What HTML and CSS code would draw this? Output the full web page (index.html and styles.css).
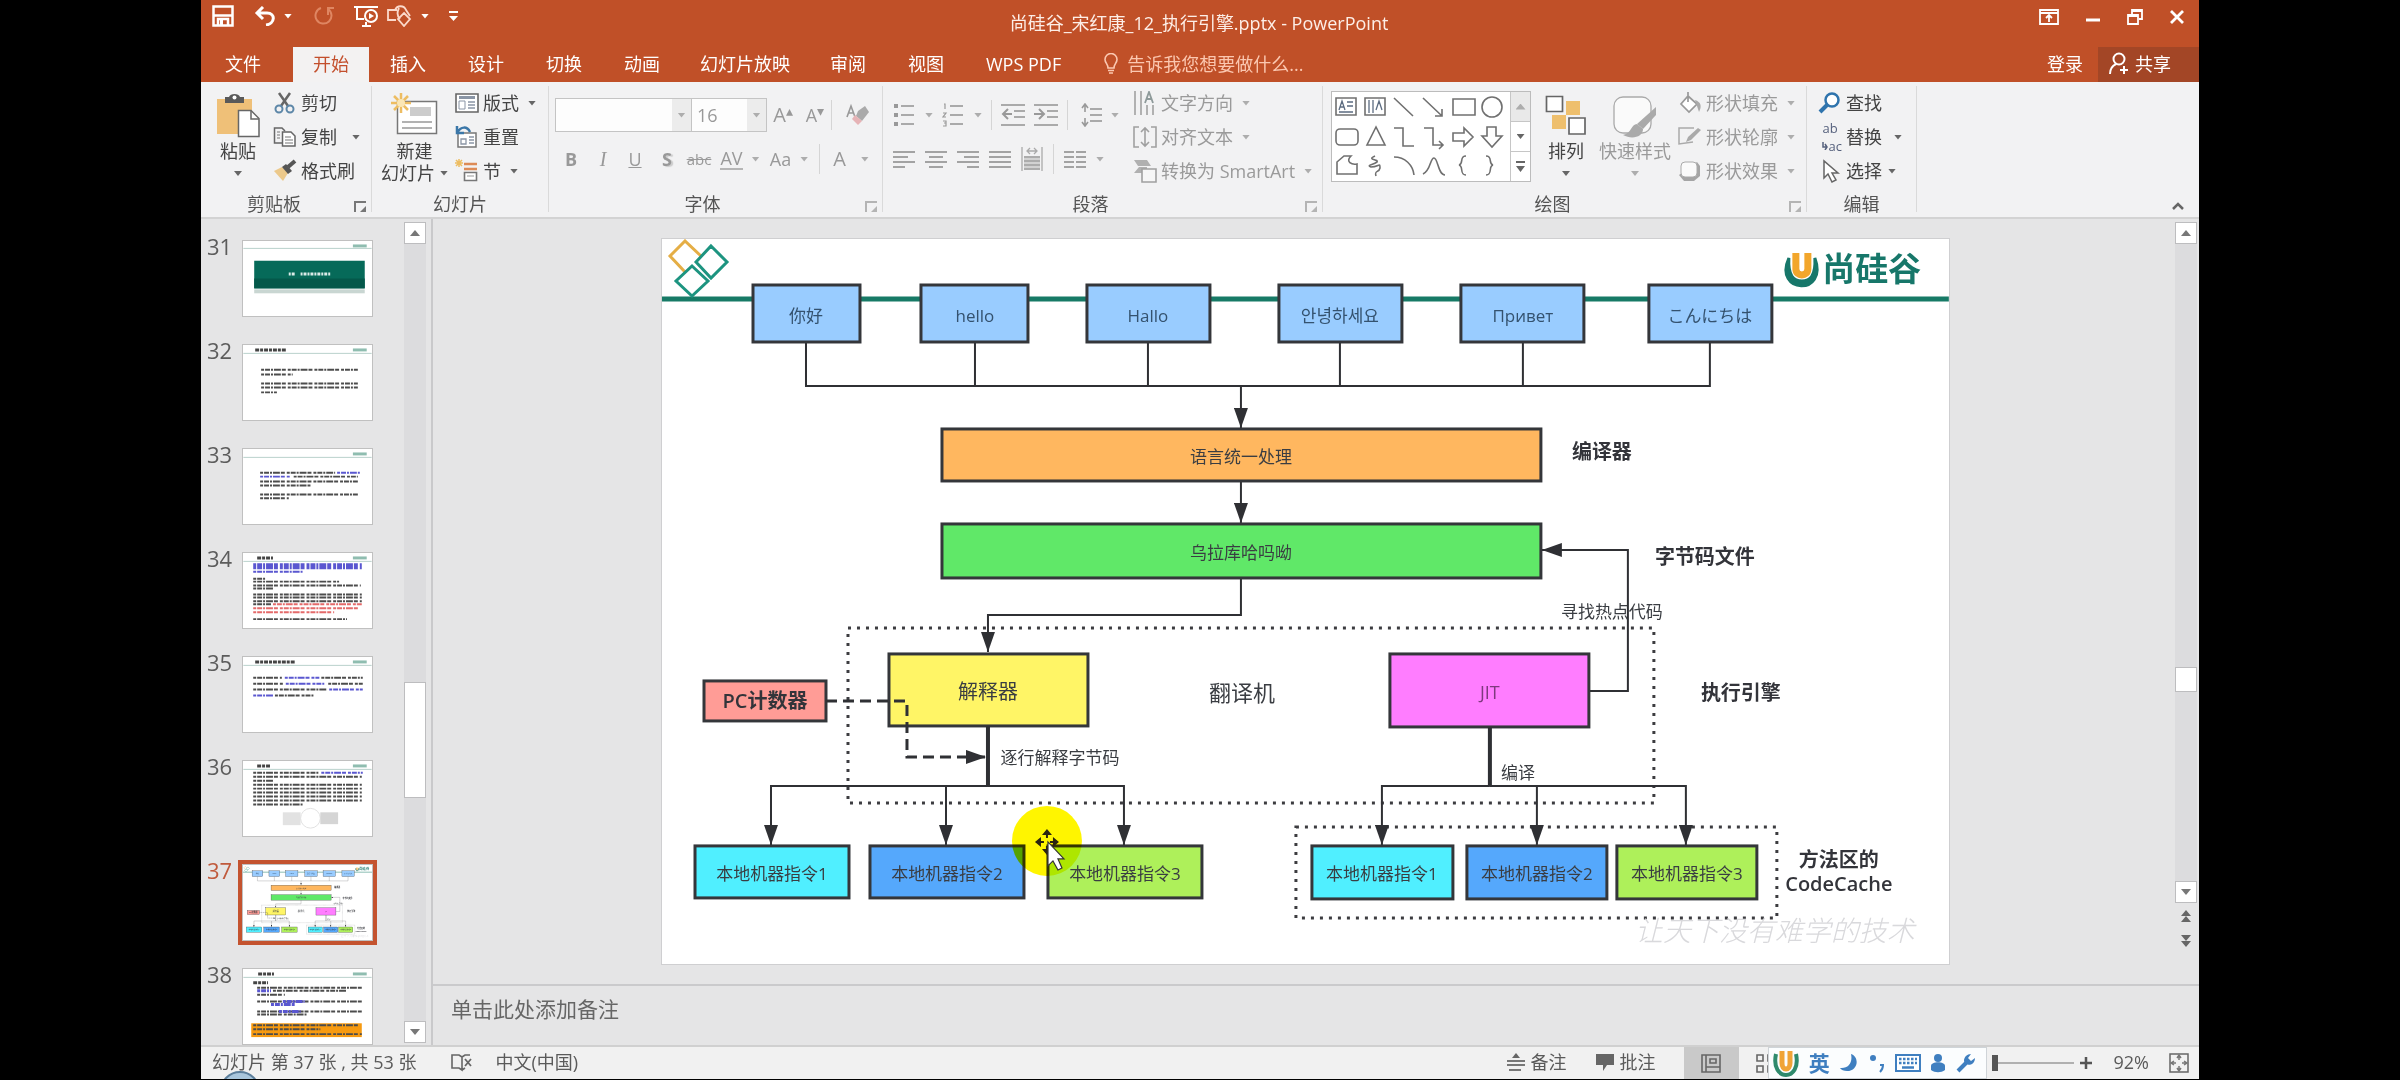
FILE: index.html
```html
<!DOCTYPE html>
<html lang="zh-CN">
<head>
<meta charset="utf-8">
<title>尚硅谷_宋红康_12_执行引擎.pptx - PowerPoint</title>
<link rel="stylesheet" href="styles.css">
</head>
<body>
<div class="app">
  <header class="titlebar">
    <div class="qat">
      <button class="qbtn" aria-label="保存"><svg width="22" height="22" viewBox="0 0 22 22"><path d="M1.5 1.500h19v19h-19z" fill="none" stroke="#fff" stroke-width="2.500"/><path d="M2 10.500h18M6 20v-6h10v6" fill="none" stroke="#fff" stroke-width="2.500"/><path d="M8 15h3v5h-3z" fill="#fff"/></svg></button>
      <button class="qbtn qbtn-undo" aria-label="撤消"><svg width="22" height="20" viewBox="0 0 22 20"><path d="M9 1 3 7l6 6M3 7h10c9 0 8 11-1 12" fill="none" stroke="#fff" stroke-width="3"/></svg><span class="caret"></span></button>
      <button class="qbtn qbtn-redo" aria-label="恢复"><svg width="20" height="20" viewBox="0 0 20 20"><path d="M7 2a8 8 0 1 0 7 1M14 9V2h6" fill="none" stroke="#df8662" stroke-width="2"/></svg></button>
      <button class="qbtn qbtn-show" aria-label="从头开始放映"><svg width="26" height="22" viewBox="0 0 26 22"><path d="M0 2h24M3 2v12h7M8 21h9M12 17v4" fill="none" stroke="#fff" stroke-width="2"/><circle cx="17" cy="11" r="6" fill="none" stroke="#fff" stroke-width="2"/><path d="m15 8 5 3-5 3z" fill="#fff"/></svg></button>
      <button class="qbtn qbtn-shape" aria-label="形状"><svg width="26" height="22" viewBox="0 0 26 22"><path d="M9 15H1V5h9M8 5c2-5 9-5 11 0l4 6M12 3c-2 4-2 8 1 11M17 8l6 6-6 7-6-7z" fill="none" stroke="#fbd9cb" stroke-width="1.800"/></svg><span class="caret"></span></button>
      <button class="qbtn qbtn-more" aria-label="自定义快速访问工具栏"><svg width="9" height="11" viewBox="0 0 9 11"><path d="M0 1h9" stroke="#fff" stroke-width="2"/><path d="M0 5h9L4.500 10z" fill="#fff"/></svg></button>
    </div>
    <h1 class="doc-title">尚硅谷_宋红康_12_执行引擎.pptx - PowerPoint</h1>
    <div class="winbtns">
      <button aria-label="功能区显示选项"><svg width="20" height="16" viewBox="0 0 20 16"><path d="M1 1h18v14H1zM1 4h18M10 13V7M7 9l3-3 3 3" fill="none" stroke="#fff" stroke-width="1.800"/></svg></button>
      <button aria-label="最小化"><svg width="14" height="16" viewBox="0 0 14 16"><path d="M0 11h14" stroke="#fff" stroke-width="3"/></svg></button>
      <button aria-label="还原"><svg width="16" height="16" viewBox="0 0 16 16"><path d="M1 6h10v9H1zM5 5V1h10v9h-3" fill="none" stroke="#fff" stroke-width="1.800"/><path d="M1 7h10M5 2h10" stroke="#fff" stroke-width="2"/></svg></button>
      <button aria-label="关闭"><svg width="14" height="14" viewBox="0 0 14 14"><path d="m1 1 12 12M13 1 1 13" stroke="#fff" stroke-width="2.800"/></svg></button>
    </div>
  </header>

  <nav class="tabs">
    <button class="tab tab-file">文件</button>
    <button class="tab tab-active">开始</button>
    <button class="tab">插入</button>
    <button class="tab">设计</button>
    <button class="tab">切换</button>
    <button class="tab">动画</button>
    <button class="tab tab-show">幻灯片放映</button>
    <button class="tab">审阅</button>
    <button class="tab">视图</button>
    <button class="tab">WPS PDF</button>
    <button class="tell"><svg width="14" height="21" viewBox="0 0 14 21"><path d="M4 15c0-4-3-5-3-8.500a6 6 0 0 1 12 0C13 10 10 11 10 15zM4 17.500h6M5 20h4" fill="none" stroke="#fbc7b0" stroke-width="1.600"/></svg>告诉我您想要做什么...</button>
    <button class="login">登录</button>
    <button class="share"><svg width="20" height="24" viewBox="0 0 20 24"><circle cx="10" cy="7" r="5.500" fill="none" stroke="#fff" stroke-width="2"/><path d="M7 12c-4 2-6 5-6 10M11 18h8M15 14v8" fill="none" stroke="#fff" stroke-width="2"/></svg>共享</button>
  </nav>

  <section class="ribbon">
    <div class="group g-clip">
      <div class="group-body">
        <button class="big big-paste"><svg width="44" height="45" viewBox="0 0 44 45"><path d="M1 6h35v35H1z" fill="#efc078"/><path d="M9 4h4c1-4 10-4 11 0h4v6H9z" fill="#595959"/><circle cx="18.500" cy="4.500" r="2" fill="#fff"/><path d="M22.500 17.500H35l8 8v18H22.500z" fill="#fff" stroke="#666" stroke-width="1.500"/><path d="M35 18v8h8" fill="none" stroke="#666" stroke-width="1.500"/></svg><span class="big-label">粘贴</span><span class="caret"></span></button>
        <div class="stack">
          <button class="tool"><svg width="24" height="24" viewBox="0 0 24 24"><path d="m6 2 9 13M17 2 8 15" stroke="#666" stroke-width="2.500"/><circle cx="6" cy="18" r="3.500" fill="none" stroke="#5d87a8" stroke-width="2"/><circle cx="17" cy="18" r="3.500" fill="none" stroke="#5d87a8" stroke-width="2"/></svg>剪切</button>
          <button class="tool"><svg width="24" height="24" viewBox="0 0 24 24"><path d="M9 18H1.500V3H9l3 3" fill="none" stroke="#666" stroke-width="1.500"/><path d="M9.500 7H18l4 4v10H9.500z" fill="#fff" stroke="#666" stroke-width="1.500"/><path d="M12 12h6M12 15h8M12 18h8M4 7h3M4 10h3M4 13h3" stroke="#777" stroke-width="1.200"/></svg>复制<span class="caret caret-wide"></span></button>
          <button class="tool"><svg width="24" height="24" viewBox="0 0 24 24"><path d="m1 12 8-4 6 6-5 8z" fill="#ecc98b"/><path d="m9 8 4-3 6 7-4 3z" fill="#555"/><path d="m15 8 7-6" stroke="#555" stroke-width="4"/></svg>格式刷</button>
        </div>
      </div>
      <div class="group-name">剪贴板<span class="launch"></span></div>
    </div>

    <div class="group g-slides">
      <div class="group-body">
        <button class="big big-new"><svg width="48" height="45" viewBox="0 0 48 45"><path d="M6.500 8.500h39v32h-39z" fill="#fff" stroke="#777" stroke-width="1.500"/><path d="M19 14h21v9H19z" fill="#ccc"/><path d="M11 29h30M11 35h30" stroke="#999" stroke-width="1.500"/><path d="M10 0v20M0 10h20M3 3l14 14M17 3 3 17" stroke="#edbd62" stroke-width="2.500"/><circle cx="10" cy="10" r="4" fill="#fbe6b4"/></svg><span class="big-label">新建</span><span class="big-label">幻灯片<span class="caret"></span></span></button>
        <div class="stack">
          <button class="tool"><svg width="24" height="24" viewBox="0 0 24 24"><path d="M1 3h22v18H1z" fill="#fff" stroke="#666" stroke-width="1.600"/><path d="M4 6.500h16" stroke="#8a95a5" stroke-width="3"/><path d="M4 10h6v8H4z" fill="none" stroke="#8a95a5"/><path d="M13 11h7M13 14h7M13 17h7" stroke="#8a95a5" stroke-width="1.500"/></svg>版式<span class="caret"></span></button>
          <button class="tool"><svg width="24" height="24" viewBox="0 0 24 24"><path d="M3 8h18v14H3z" fill="#fff" stroke="#777" stroke-width="1.500"/><path d="M6 14h5v5H6zM14 12h5M14 15h5M14 18h5" fill="none" stroke="#8a95a5" stroke-width="1.300"/><path d="M2 1v7h7M2 8C6 1 12 1 15 7" fill="none" stroke="#3b77a8" stroke-width="2.500"/></svg>重置</button>
          <button class="tool"><svg width="24" height="24" viewBox="0 0 24 24"><path d="M9 5h13M9 10h13" stroke="#dd8b56" stroke-width="2.500"/><path d="M9.500 13.500h12v8h-12z" fill="#fff" stroke="#777" stroke-width="1.600"/><path d="M12 17h7" stroke="#999"/><path d="M4 0v8M0 4h8M1 1l6 6M7 1 1 7" stroke="#edbd62" stroke-width="1.500"/></svg>节<span class="caret"></span></button>
        </div>
      </div>
      <div class="group-name">幻灯片</div>
    </div>

    <div class="group g-font">
      <div class="group-rows">
        <div class="rrow">
          <label class="combo combo-name"><select aria-label="字体"><option></option></select><span class="combo-arrow"><span class="caret dim"></span></span></label>
          <label class="combo combo-size"><select aria-label="字号"><option>16</option></select><span class="combo-arrow"><span class="caret dim"></span></span></label>
          <button class="fbtn f-grow" aria-label="增大字号">A<sup>▴</sup></button>
          <button class="fbtn f-shrink" aria-label="减小字号">A<sup>▾</sup></button>
          <span class="vsep"></span>
          <button class="fbtn f-clear" aria-label="清除格式"><svg width="24" height="24" viewBox="0 0 24 24"><path d="m1 14 4-11 4 11M2 10h6" fill="none" stroke="#999" stroke-width="1.600"/><path d="m12 8 7-5 4 6-7 9-6-5z" fill="#aaa"/><path d="m9 12 7 6-4 4-6-6z" fill="#e6b3b6"/></svg></button>
        </div>
        <div class="rrow">
          <button class="fbtn"><b>B</b></button>
          <button class="fbtn f-serif"><i>I</i></button>
          <button class="fbtn"><u>U</u></button>
          <button class="fbtn f-shadow"><b>S</b></button>
          <button class="fbtn f-strike"><s>abc</s></button>
          <button class="fbtn f-av"><span class="av">AV</span><span class="caret dim"></span></button>
          <button class="fbtn f-aa">Aa<span class="caret dim"></span></button>
          <span class="vsep"></span>
          <button class="fbtn f-color">A<span class="caret dim"></span></button>
        </div>
      </div>
      <div class="group-name name-font">字体<span class="launch dim"></span></div>
    </div>

    <div class="group g-para">
      <div class="group-body">
        <div class="group-rows">
          <div class="rrow prow">
            <button class="pbtn"><svg width="22" height="24" viewBox="0 0 22 24"><path d="M8 3h13M8 12h13M8 21h13" stroke="#aaa" stroke-width="1.800"/><path d="M1 3h4M1 12h4M1 21h4" stroke="#999" stroke-width="4"/></svg><span class="caret dim"></span></button>
            <button class="pbtn"><svg width="22" height="24" viewBox="0 0 22 24"><path d="M8 3h13M8 12h13M8 21h13" stroke="#aaa" stroke-width="1.800"/><path d="M2 1h1v5M1 10h3l-3 4h3M1 18h3v5H1M2 20h2" fill="none" stroke="#999" stroke-width="1.200"/></svg><span class="caret dim"></span></button>
            <span class="vsep"></span>
            <button class="pbtn"><svg width="24" height="24" viewBox="0 0 24 24"><path d="M0 2h24M13 8h11M13 14h11M0 22h24" stroke="#aaa" stroke-width="1.800"/><path d="M11 11H3M7 6l-5 5 5 5" fill="none" stroke="#999" stroke-width="2"/></svg></button>
            <button class="pbtn"><svg width="24" height="24" viewBox="0 0 24 24"><path d="M0 2h24M13 8h11M13 14h11M0 22h24" stroke="#aaa" stroke-width="1.800"/><path d="M0 11h9M5 6l5 5-5 5" fill="none" stroke="#999" stroke-width="2"/></svg></button>
            <span class="vsep"></span>
            <button class="pbtn pbtn-space"><svg width="22" height="24" viewBox="0 0 22 24"><path d="M9 6h12M9 12h12M9 18h12" stroke="#aaa" stroke-width="1.800"/><path d="M4 1v8M4 15v8M1 5l3-4 3 4M1 19l3 4 3-4" fill="none" stroke="#999" stroke-width="1.600"/></svg><span class="caret dim"></span></button>
          </div>
          <div class="rrow prow prow-align">
            <button class="pbtn"><svg width="22" height="18" viewBox="0 0 22 18"><path d="M0 2h22M0 7h15M0 12h22M0 17h12" stroke="#a3a3a3" stroke-width="1.800"/></svg></button>
            <button class="pbtn"><svg width="22" height="18" viewBox="0 0 22 18"><path d="M0 2h22M4 7h14M0 12h22M4 17h14" stroke="#a3a3a3" stroke-width="1.800"/></svg></button>
            <button class="pbtn"><svg width="22" height="18" viewBox="0 0 22 18"><path d="M0 2h22M7 7h15M0 12h22M10 17h12" stroke="#a3a3a3" stroke-width="1.800"/></svg></button>
            <button class="pbtn"><svg width="22" height="18" viewBox="0 0 22 18"><path d="M0 2h22M0 7h22M0 12h22M0 17h22" stroke="#a3a3a3" stroke-width="1.800"/></svg></button>
            <button class="pbtn"><svg width="22" height="24" viewBox="0 0 22 24"><path d="M1 0v24M21 0v24M6 4h10M9 1 6 4l3 3M13 1l3 3-3 3" fill="none" stroke="#aaa" stroke-width="1.300"/><path d="M3 9h16v14H3z" fill="#d2d2d2"/><path d="M3 10h16M3 14h16M3 18h16M3 22h16" stroke="#a0a0a0" stroke-width="1.500"/></svg></button>
            <span class="vsep"></span>
            <button class="pbtn"><svg width="22" height="18" viewBox="0 0 22 18"><path d="M0 2h10M12 2h10M0 7h10M12 7h10M0 12h10M12 12h10M0 17h10M12 17h10" stroke="#a3a3a3" stroke-width="1.800"/></svg><span class="caret dim"></span></button>
          </div>
        </div>
        <div class="stack stack-para">
          <button class="tool off"><svg width="24" height="24" viewBox="0 0 24 24"><path d="M2 0v24M8 0v24M14 14v10M20 14v10" stroke="#aaa" stroke-width="1.800"/><path d="m12 12 4-11 4 11M14 8h5" fill="none" stroke="#8e9a9a" stroke-width="1.800"/></svg>文字方向<span class="caret dim"></span></button>
          <button class="tool off"><svg width="24" height="24" viewBox="0 0 24 24"><path d="M6 2H1v20h5M18 2h5v20h-5M12 3v18M8 7l4-4 4 4M8 17l4 4 4-4" fill="none" stroke="#a0a0a0" stroke-width="1.600"/></svg>对齐文本<span class="caret dim"></span></button>
          <button class="tool off"><svg width="24" height="24" viewBox="0 0 24 24"><path d="M1 1h13l4 6H5zM1 14l5-6h8v6z" fill="#b0b0b0"/><path d="M9 10h14v13H9z" fill="#f6f6f6" stroke="#a0a0a0" stroke-width="1.600"/></svg>转换为 SmartArt<span class="caret dim"></span></button>
        </div>
      </div>
      <div class="group-name">段落<span class="launch dim"></span></div>
    </div>

    <div class="group g-draw">
      <div class="group-body">
        <div class="gallery">
          <svg class="shapes" viewBox="0 0 178 88" width="178" height="88">
            <g fill="none" stroke="#707070" stroke-width="1.600">
              <path d="M4 6h20v17H4zM33 6h20v17H33z"/><path d="m7 18 3-9 3 9M8 15h4M15 10h6M15 14h6M7 20h14M37 8v13M41 8v13M44 18l3-9 3 9" stroke="#5b6b80" stroke-width="1.300"/>
              <path d="m62 6 19 18M91 6l19 18M110 17v7h-7M121 7h22v16h-22z"/><circle cx="160" cy="15" r="10"/>
              <rect x="4" y="37" width="22" height="16" rx="4"/><path d="m44 35-9 18h18zM62 36h9v18h11M92 36h9v17h9M107 49l4 4-4 4M121 41h11v-5l9 9-9 9v-5h-11zM155 35h9v9h6l-10 11-10-11h5z"/>
              <path d="m5 70 7-6h7c-6 6 1 9 6 8v10H5zM43 64c-9 4 4 3 2 6-4 3-11 3-6 5 8 0 9-5 9 1-1 5-6 2-4 8M62 65c11 0 19 8 20 18M91 82c8-4 7-16 11-16s4 17 11 17M134 64c-7 0-2 8-7 9 5 1 0 10 7 10M154 64c7 0 2 8 7 9-5 1 0 10-7 10"/>
            </g>
          </svg>
          <div class="gallery-nav"><button class="gnav-off" aria-label="上一行"><span class="caret-up dim"></span></button><button aria-label="下一行"><span class="caret"></span></button><button aria-label="其他"><span class="caret caret-bar"></span></button></div>
        </div>
        <button class="big big-arr"><svg width="42" height="45" viewBox="0 0 42 45"><path d="M21 8h14v14H21zM7 22h14v14H7z" fill="#eebf6d"/><path d="M1.500 3.500h16v15h-16zM24 25h16v16H24z" fill="#fff" stroke="#666" stroke-width="1.700"/></svg><span class="big-label">排列</span><span class="caret"></span></button>
        <button class="big big-style off"><svg width="44" height="45" viewBox="0 0 44 45"><rect x="1" y="4" width="37" height="36" rx="9" fill="#fafafa" stroke="#aaa" stroke-width="1.300"/><path d="M43 14v8L30 36l-6-5z" fill="#aaa"/><path d="M24 31c-6 0-5 9-14 11 9 5 20 2 20-6z" fill="#aaa"/></svg><span class="big-label">快速样式</span><span class="caret dim"></span></button>
        <div class="stack stack-draw">
          <button class="tool off"><svg width="24" height="24" viewBox="0 0 24 24"><path d="m10 5 9 8-8 8-8-8zM10 11V1" fill="#fff" stroke="#999" stroke-width="1.700"/><path d="M17 9c6 2 7 6 4 12z" fill="#aaa"/></svg>形状填充<span class="caret dim"></span></button>
          <button class="tool off"><svg width="24" height="24" viewBox="0 0 24 24"><path d="M16 3H1v16l14-2" fill="none" stroke="#aaa" stroke-width="1.500"/><path d="m8 17 2-5L20 3l3 2-10 10z" fill="#aaa"/></svg>形状轮廓<span class="caret dim"></span></button>
          <button class="tool off"><svg width="24" height="24" viewBox="0 0 24 24"><path d="m1 16 5 6h10l6-5V7l-3-4z" fill="#a5a5a5"/><rect x="3" y="3" width="16" height="15" rx="4" fill="#fafafa" stroke="#aaa"/></svg>形状效果<span class="caret dim"></span></button>
        </div>
      </div>
      <div class="group-name">绘图<span class="launch dim"></span></div>
    </div>

    <div class="group g-edit">
      <div class="group-body">
        <div class="stack">
          <button class="tool"><svg width="24" height="24" viewBox="0 0 24 24"><circle cx="14" cy="9" r="6.500" fill="#fff" stroke="#2f74ad" stroke-width="2.500"/><path d="m9 14-7 7" stroke="#2f74ad" stroke-width="4"/></svg>查找</button>
          <button class="tool"><span class="abac"><span>ab</span><span class="ac"><svg width="6" height="8" viewBox="0 0 6 8"><path d="M1 0v5h4M3 2l2 3-2 3" fill="none" stroke="#56617d" stroke-width="1.500"/></svg>ac</span></span>替换<span class="caret caret-wide"></span></button>
          <button class="tool"><svg width="24" height="24" viewBox="0 0 24 24"><path d="M6 2v17l4-4 4 8 4-2-4-7h6z" fill="#fff" stroke="#666" stroke-width="1.500"/></svg>选择<span class="caret"></span></button>
        </div>
      </div>
      <div class="group-name">编辑</div>
    </div>
    <button class="collapse" aria-label="折叠功能区"><svg width="12" height="8" viewBox="0 0 12 8"><path d="m1 7 5-5 5 5" fill="none" stroke="#666" stroke-width="2.500"/></svg></button>
  </section>

  <main class="work">
    <aside class="panel">
      <ol class="thumbs" start="31">
        <li><span class="num">31</span><div class="thumb"><svg viewBox="0 0 130 76">
          <path class="t-rule" d="M0 7.500h130"/><path class="t-logo" d="M111 5h14"/><rect x="11" y="49" width="112" height="4" fill="#c9d6d2"/><rect x="11" y="20" width="112" height="28" fill="#066a59"/><rect x="11" y="38" width="112" height="10" fill="#04584a"/><path d="M46 33.500h7M58 33.500h30" stroke="#dcebe8" stroke-width="3" stroke-dasharray="2 1 3 1"/></svg></div></li>
        <li><span class="num">32</span><div class="thumb"><svg viewBox="0 0 130 76">
          <path class="t-rule" d="M0 8.500h130"/><path class="t-logo" d="M111 5h14"/><path class="t-head" d="M12 5h32"/><path class="t-line" d="M18 25h98M18 30h32M18 39h98M18 43h98M18 48h16"/></svg></div></li>
        <li><span class="num">33</span><div class="thumb"><svg viewBox="0 0 130 76">
          <path class="t-rule" d="M0 8.500h130"/><path class="t-logo" d="M111 5h14"/><path class="t-line" d="M17 24h76M51 28h65M17 33h99M17 37h51M17 46h99M17 50h29"/><path class="t-line t-blue" d="M95 24h23M17 28h31"/></svg></div></li>
        <li><span class="num">34</span><div class="thumb"><svg viewBox="0 0 130 76">
          <path class="t-rule" d="M0 8.500h130"/><path class="t-logo" d="M111 5h14"/><path class="t-head" d="M14 5h16"/><path class="t-line t-blue t-fat" d="M10 12h110M10 15h110"/><path class="t-line t-blue" d="M10 19h50"/><path class="t-line" d="M10 26h12M10 29h87M10 33h109M10 36h20M10 42h110M10 45h110M10 49h110M10 52h18M10 67h95"/><path class="t-line t-red" d="M30 52h90M10 56h108M10 60h82"/></svg></div></li>
        <li><span class="num">35</span><div class="thumb"><svg viewBox="0 0 130 76">
          <path class="t-rule" d="M0 8.500h130"/><path class="t-logo" d="M111 5h14"/><path class="t-head" d="M12 5h41"/><path class="t-line" d="M10 21h29M79 21h42M10 27h31M86 27h35M10 33h75M32 39h39"/><path class="t-line t-blue" d="M42 21h35M43 27h40M87 33h34M10 39h20"/></svg></div></li>
        <li><span class="num">36</span><div class="thumb"><svg viewBox="0 0 130 76">
          <path class="t-rule" d="M0 8.500h130"/><path class="t-logo" d="M111 5h14"/><path class="t-head" d="M14 5h13"/><path class="t-line" d="M10 12h66M10 16h110M10 20h20M10 24h110M10 28h110M10 32h110M10 36h110M10 40h110M10 44h50"/><path class="t-line t-blue" d="M79 12h42"/><rect x="40" y="52" width="18" height="13" fill="#e2e2e2"/><circle cx="68" cy="58" r="10" fill="none" stroke="#e2e2e2"/><rect x="78" y="52" width="18" height="12" fill="#d5d5d5"/></svg></div></li>
        <li class="current"><span class="num">37</span><div class="thumb"><svg viewBox="0 0 1287 725"><use href="#slide-art"/></svg></div></li>
        <li><span class="num">38</span><div class="thumb"><svg viewBox="0 0 130 76">
          <path class="t-rule" d="M0 8.500h130"/><path class="t-logo" d="M111 5h14"/><path class="t-head" d="M15 5h16M10 14h15"/><path class="t-line" d="M14 19h106M30 22h74M14 26h28M14 33h106M14 43h106M14 46h50"/><path class="t-line t-blue t-fat" d="M14 22h14M40 33h22M28 36h24M36 43h22"/><rect x="8" y="55" width="112" height="14" fill="#f79a10"/><path class="t-line" d="M10 57h106M10 61h68M10 66h110"/></svg></div></li>
      </ol>
      <div class="scroll scroll-panel"><button aria-label="向上滚动"><span class="caret-up"></span></button><div class="track"><div class="grip"></div></div><button aria-label="向下滚动"><span class="caret"></span></button></div>
    </aside>

    <div class="editor">
      <div class="stage-row">
        <div class="stage">
          <div class="slide">
            <svg class="slide-svg" viewBox="0 0 1287 725">
              <defs>
                <marker id="arrow" viewBox="0 0 20 14" refX="20" refY="7" markerWidth="20" markerHeight="14" markerUnits="userSpaceOnUse" orient="auto"><path d="M0 0 20 7 0 14z" fill="#2f3034"/></marker>
              </defs>
              <g id="slide-art">
                <path class="brand-rule" d="M0 60h1287"/>
                <path class="diamond d-gold" d="M39 17 23 2 8 17l15 16"/>
                <path class="diamond" d="m49 7 16 16-16 16-15-16zM30 27l16 15-16 15-16-15z"/>
                <path d="M1127 19c-16 36 40 38 26 0 1 18-5 23-13 23s-14-5-13-23z" fill="#17776a" stroke="#17776a" stroke-width="3"/>
                <path d="M1134 14v16c0 8 12 8 12 0V14" fill="none" stroke="#f2a62c" stroke-width="7"/>
                <text class="brand" x="1210" y="42">尚硅谷</text>

                <path class="wire" d="M144 103v44h904v-44M313 103v44M486 103v44M678 103v44M861 103v44"/>
                <path class="wire" marker-end="url(#arrow)" d="M579 147v42"/>
                <path class="wire" marker-end="url(#arrow)" d="M579 242v42"/>
                <path class="wire" marker-end="url(#arrow)" d="M579 339v37H326v37"/>
                <path class="wire" marker-end="url(#arrow)" d="M927 452h39V311h-86"/>
                <rect class="frame" x="186" y="389" width="806" height="175"/>
                <rect class="frame" x="634" y="588" width="481" height="91"/>

                <g class="node n-sky">
                  <rect x="91" y="46" width="107" height="57"/><rect x="259" y="46" width="107" height="57"/><rect x="425" y="46" width="123" height="57"/><rect x="617" y="46" width="123" height="57"/><rect x="799" y="46" width="123" height="57"/><rect x="987" y="46" width="123" height="57"/>
                </g>
                <g class="lbl l-sky"><text x="144" y="83">你好</text><text x="313" y="83">hello</text><text x="486" y="83">Hallo</text><text x="678" y="83">안녕하세요</text><text x="861" y="83">Привет</text><text x="1048" y="83">こんにちは</text></g>

                <g class="node"><rect class="n-orange" x="280" y="190" width="599" height="52"/><rect class="n-green" x="280" y="285" width="599" height="54"/><rect class="n-yellow" x="227" y="415" width="199" height="72"/><rect class="n-red" x="42" y="442" width="122" height="40"/><rect class="n-pink" x="728" y="415" width="199" height="73"/></g>
                <g class="lbl"><text x="579" y="224">语言统一处理</text><text x="579" y="320">乌拉库哈吗呦</text><text x="398" y="525">逐行解释字节码</text><text x="856" y="540">编译</text><text class="md" x="326" y="460">解释器</text><text class="jit" x="828" y="460">JIT</text><text class="hot" x="950" y="379">寻找热点代码</text><text class="xl" x="580" y="462">翻译机</text></g>
                <g class="lbl strong"><text x="103" y="469">PC计数器</text><text x="940" y="220">编译器</text><text x="1043" y="325">字节码文件</text><text x="1079" y="461">执行引擎</text><text x="1177" y="628">方法区的</text><text x="1177" y="652">CodeCache</text></g>

                <path class="wire dash" marker-end="url(#arrow)" d="M164 462h81v56h79"/>
                <path class="wire thick" d="M326 487v60M828 488v59"/>
                <path class="wire" marker-end="url(#arrow)" d="M326 547H109v59"/>
                <path class="wire" marker-end="url(#arrow)" d="M284 547v59"/>
                <path class="wire" marker-end="url(#arrow)" d="M326 547h136v59"/>
                <path class="wire" marker-end="url(#arrow)" d="M828 547H720v59"/>
                <path class="wire" marker-end="url(#arrow)" d="M875 547v59"/>
                <path class="wire" marker-end="url(#arrow)" d="M828 547h196v59"/>

                <g class="node"><rect class="n-cyan" x="33" y="607" width="154" height="52"/><rect class="n-blue" x="208" y="607" width="154" height="52"/><rect class="n-lime" x="386" y="607" width="154" height="52"/><rect class="n-cyan" x="650" y="607" width="141" height="53"/><rect class="n-blue" x="805" y="607" width="140" height="53"/><rect class="n-lime" x="955" y="607" width="140" height="53"/></g>
                <g class="lbl"><text x="110" y="641">本地机器指令1</text><text x="285" y="641">本地机器指令2</text><text x="463" y="641">本地机器指令3</text><text x="720" y="641">本地机器指令1</text><text x="875" y="641">本地机器指令2</text><text x="1025" y="641">本地机器指令3</text></g>
                <text class="motto" x="1113" y="702">让天下没有难学的技术</text>
              </g>
              <circle class="halo" cx="385" cy="602" r="35"/>
              <path d="M385 590l5 6h-4v3h-2v-3h-4zM373 603l6-5v4h3v2h-3v4zM397 603l-6-5v4h-3v2h3v4zM385 616l-5-6h4v-3h2v3h4z" fill="#2b2410"/>
              <path d="M386 603v24l5-5 5 9 4-2-4-9h6z" fill="#fff" stroke="#333" stroke-width="1.200"/>
            </svg>
          </div>
        </div>
        <div class="scroll scroll-main"><button aria-label="向上滚动"><span class="caret-up"></span></button><div class="track"><div class="grip"></div></div><button aria-label="向下滚动"><span class="caret"></span></button>
          <button class="jump" aria-label="上一张幻灯片"><svg width="12" height="12" viewBox="0 0 12 12"><path d="m6 0 5 6H1zM6 6l5 6H1z" fill="#666"/></svg></button>
          <button class="jump" aria-label="下一张幻灯片"><svg width="12" height="12" viewBox="0 0 12 12"><path d="M1 0h10L6 6zM1 6h10l-5 6z" fill="#666"/></svg></button>
        </div>
      </div>
      <div class="notes">单击此处添加备注</div>
    </div>
  </main>

  <footer class="status">
    <span class="s-count">幻灯片 第 37 张 , 共 53 张</span>
    <button class="s-spell" aria-label="拼写检查"><svg width="22" height="20" viewBox="0 0 22 20"><path d="M11 17 8 15H1V2h7l3 2zM11 4l3-2h5M11 17l3-2" fill="none" stroke="#666" stroke-width="1.600"/><path d="m14 6 6 7M20 6l-6 7" stroke="#666" stroke-width="1.800"/></svg></button>
    <button class="s-lang">中文(中国)</button>
    <button class="s-btn s-right"><svg width="18" height="18" viewBox="0 0 18 18"><path d="m9 0 4 5H5z" fill="#666"/><path d="M0 8h18M0 12h18M2 17h12" stroke="#777" stroke-width="1.800"/></svg>备注</button>
    <button class="s-btn s-comment"><svg width="18" height="18" viewBox="0 0 18 18"><path d="M0 1h18v11h-7l-4 6v-6H0z" fill="#666"/></svg>批注</button>
    <button class="s-view" aria-label="普通视图"><svg width="20" height="19" viewBox="0 0 20 19"><path d="M1 1h18v17H1zM5 1v17M5 13h14M9 5h6v4H9z" fill="none" stroke="#666" stroke-width="1.600"/></svg></button>
    <button class="s-sorter" aria-label="幻灯片浏览"><svg width="20" height="19" viewBox="0 0 20 19"><path d="M1 1h6v6H1zM12 1h6v6h-6zM1 12h6v6H1zM12 12h6v6h-6z" fill="none" stroke="#666" stroke-width="1.600"/></svg></button>
    <input class="s-zoom" type="range" min="0" max="100" value="0" aria-label="显示比例">
    <button class="s-plus" aria-label="放大"><svg width="12" height="12" viewBox="0 0 12 12"><path d="M6 0v12M0 6h12" stroke="#555" stroke-width="2.500"/></svg></button>
    <button class="s-pct">92%</button>
    <button class="s-fit" aria-label="适应窗口"><svg width="20" height="20" viewBox="0 0 20 20"><path d="M1 1h18v18H1z" fill="none" stroke="#666" stroke-width="1.500"/><path d="M10 3v4M10 17v-4M3 10h4M17 10h-4M8 5l2-3 2 3M8 15l2 3 2-3M5 8l-3 2 3 2M15 8l3 2-3 2" fill="none" stroke="#777" stroke-width="1.500"/></svg></button>
    <div class="ime">
      <svg width="26" height="28" viewBox="0 0 26 28"><path d="M3 5c-6 28 26 28 20 0" fill="none" stroke="#2f8a6c" stroke-width="4"/><path d="M9 2v12c0 8 8 8 8 0V2" fill="none" stroke="#f0a437" stroke-width="5"/></svg>
      <span class="ime-lang">英</span>
      <svg width="20" height="20" viewBox="0 0 20 20"><path d="M12 1c9 3 7 17-4 17-3 0-6-1-7-3 8 1 13-5 11-14z" fill="#3f7fc0"/></svg>
      <svg width="16" height="20" viewBox="0 0 16 20"><circle cx="4" cy="5" r="3" fill="#3f7fc0"/><path d="M11 12h3c0 3-1 5-3 7" fill="none" stroke="#3f7fc0" stroke-width="2"/></svg>
      <svg width="26" height="20" viewBox="0 0 26 20"><rect x="1" y="2" width="24" height="16" fill="#fff" stroke="#3f7fc0" stroke-width="2"/><path d="M4 6h18M4 10h18" stroke="#3f7fc0" stroke-width="2.500" stroke-dasharray="2.500 1.500"/><path d="M7 14.500h12" stroke="#3f7fc0" stroke-width="2.500"/></svg>
      <svg width="16" height="20" viewBox="0 0 16 20"><circle cx="8" cy="5" r="4" fill="#3f7fc0"/><path d="M1 13c0-5 14-5 14 0v4c-4 3-10 3-14 0z" fill="#3f7fc0"/></svg>
      <svg width="20" height="20" viewBox="0 0 20 20"><path d="m2 18 8-8" stroke="#3f7fc0" stroke-width="4"/><path d="M19 5c0 8-10 9-11 3 0-4 3-7 7-7l-3 4 3 3z" fill="#3f7fc0"/></svg>
    </div>
    <span class="orb"></span>
  </footer>
</div>
</body>
</html>
```
FILE: styles.css
```css
* { box-sizing: border-box; }

body {
  margin: 0;
  background: #000;
  color: #444;
  font-family: "Open Sans", "Noto Sans CJK SC", sans-serif;
  font-size: 18px;
  line-height: 22px;
}

button {
  margin: 0;
  padding: 0;
  border: 0;
  background: none;
  color: inherit;
  font: inherit;
  display: flex;
  align-items: center;
  white-space: nowrap;
}

svg { flex: none; display: block; }

.app {
  height: 100vh;
  margin: 0 201px;
  border-bottom: 1px solid #000;
  display: flex;
  flex-direction: column;
  background: #e5e5e6;
  overflow: hidden;
}

/* small arrows */
.caret {
  flex: none;
  width: 8px;
  height: 5px;
  background: #666;
  clip-path: polygon(0 0, 100% 0, 50% 100%);
}
.caret-up {
  width: 10px;
  height: 6px;
  background: #777;
  clip-path: polygon(50% 0, 100% 100%, 0 100%);
}
.caret-bar {
  width: 9px;
  height: 11px;
  clip-path: polygon(0 0, 100% 0, 100% 18%, 0 18%, 0 45%, 100% 45%, 50% 100%, 0 45%);
}
.caret.dim, .caret-up.dim { background: #adadad; }

/* title bar */
.titlebar {
  flex: none;
  height: 47px;
  background: #c05028;
  color: #fff;
  display: grid;
  grid-template-columns: 1fr auto 1fr;
}
.qat { display: flex; padding: 5px 0 0 11px; height: 27px; }
.qbtn .caret { background: #fff; margin-left: 8px; }
.qbtn-undo { margin-left: 20px; }
.qbtn-redo { margin-left: 22px; }
.qbtn-show { margin-left: 20px; }
.qbtn-shape { margin-left: 7px; }
.qbtn-more { margin-left: 20px; }
.doc-title { margin: 0; padding: 12px 2px 0 0; font-size: 18px; font-weight: 400; color: #fdeee7; }
.winbtns { display: flex; justify-content: flex-end; gap: 27px; padding: 8px 15px 0 0; height: 25px; }

/* tabs */
.tabs { flex: none; height: 35px; background: #c05028; color: #fff; display: flex; }
.tab { padding: 0 21px; }
.tab-file { padding: 0 32px 0 24px; }
.tab-active { background: #f3f2f2; color: #c34f2c; padding: 0 20px; }
.tab-show { padding: 0 19px; }
.tabs button { padding-bottom: 2px; }
.tell { gap: 9px; margin-left: 22px; color: #fbc7b0; }
.login { margin-left: auto; margin-right: 15px; }
.share { width: 101px; padding-left: 11px; gap: 6px; background: #a34626; }

/* ribbon */
.ribbon {
  flex: none;
  height: 137px;
  background: #f2f2f3;
  border-bottom: 2px solid #d3d3d3;
  display: flex;
  padding-top: 4px;
}
.group {
  flex: none;
  height: 126px;
  border-right: 1px solid #dadada;
  display: flex;
  flex-direction: column;
}
.g-clip { width: 171px; }
.g-slides { width: 177px; }
.g-font { width: 334px; }
.g-para { width: 440px; }
.g-draw { width: 484px; }
.g-edit { width: 110px; }
.group-body, .group-rows { flex: none; height: 104px; }
.group-body { display: flex; }
.group-name {
  flex: none;
  position: relative;
  height: 28px;
  line-height: 28px;
  text-align: center;
  padding-right: 24px;
  color: #555;
}
.g-slides .group-name, .g-edit .group-name { padding: 0; }
.launch {
  position: absolute;
  right: 5px;
  bottom: 6px;
  width: 12px;
  height: 11px;
  border-top: 2px solid #777;
  border-left: 2px solid #777;
}
.launch::after {
  content: "";
  position: absolute;
  right: 0;
  bottom: 0;
  width: 6px;
  height: 6px;
  background: #777;
  clip-path: polygon(100% 0, 100% 100%, 0 100%);
}
.launch.dim { opacity: .5; }

.big { flex-direction: column; height: 98px; padding-top: 7px; justify-content: flex-start; }
.big-label { display: flex; align-items: center; gap: 5px; height: 22px; flex: none; }
.big svg { margin-bottom: 2px; }
.big > .caret { margin-top: 9px; }
.big-paste { width: 72px; padding-left: 2px; }
.big-new { width: 83px; padding-left: 2px; }
.big-arr { width: 60px; margin-left: 5px; }
.big-style { width: 78px; }
.off { color: #9a9a9a; }

.stack { display: flex; flex-direction: column; }
.stack .tool { height: 34px; gap: 4px; }
.tool .caret { margin-left: 5px; }
.tool .caret-wide { margin-left: 11px; }
.g-edit .stack { padding-left: 11px; }
.g-edit .caret { margin-left: 2px; }
.g-edit .caret-wide { margin-left: 8px; }
.abac {
  display: flex;
  flex-direction: column;
  width: 24px;
  color: #56617d;
  font-size: 13px;
  line-height: 18px;
}
.ac { display: flex; align-items: center; justify-content: flex-end; gap: 1px; }
.stack-para { margin-left: 14px; }
.stack-draw { margin-left: 4px; }

.rrow { display: flex; align-items: center; height: 44px; padding-left: 6px; }
.group-rows { padding-top: 7px; }
.vsep { width: 1px; height: 30px; background: #d5d5d5; flex: none; }

.combo { position: relative; height: 34px; background: #fdfdfd; border: 1px solid #c4c4c4; display: block; }
.combo + .combo { border-left: 0; }
.combo-name { width: 137px; }
.combo-size { width: 75px; }
.combo select {
  appearance: none;
  width: 100%;
  height: 100%;
  border: 0;
  background: none;
  padding: 0 0 0 5px;
  font: inherit;
  color: #999;
}
.combo-arrow {
  position: absolute;
  inset: 0 0 0 auto;
  width: 19px;
  background: #ececec;
  display: flex;
  align-items: center;
  justify-content: center;
  pointer-events: none;
}

.fbtn { width: 32px; justify-content: center; color: #999; }
.fbtn sup { font-size: 14px; line-height: 14px; align-self: flex-start; }
.f-grow { font-size: 20px; }
.f-shrink { font-size: 18px; }
.f-clear { margin-left: 10px; }
.f-serif { font-family: "Liberation Serif", serif; font-size: 20px; }
.f-shadow { text-shadow: 2px 1px 1px #ccc; }
.f-strike { font-size: 15px; }
.f-av { width: 50px; gap: 9px; }
.f-aa { width: 48px; gap: 9px; }
.f-color { width: 54px; gap: 15px; font-size: 20px; margin-left: 4px; }
.av { border-bottom: 2px solid #b5b5b5; line-height: 20px; }
.f-aa + .vsep { margin-left: 6px; }
.name-font { padding-right: 26px; }

.prow { padding-left: 10px; gap: 9px; }
.prow-align { gap: 10px; }
.pbtn { gap: 10px; }
.pbtn-space { padding-left: 4px; gap: 8px; }

.gallery {
  flex: none;
  display: flex;
  width: 200px;
  height: 91px;
  margin: 5px 0 0 8px;
  background: #fff;
  border: 1px solid #bcbcbc;
}
.gallery-nav { flex: 1; display: flex; flex-direction: column; border-left: 1px solid #c6c6c6; }
.gallery-nav button { flex: 1; justify-content: center; }
.gallery-nav button + button { border-top: 1px solid #c6c6c6; }
.gnav-off { background: #e9e9e9; }
.collapse { margin: auto 15px 7px auto; }

/* workspace */
.work { flex: 1; min-height: 0; display: flex; }
.panel { flex: none; width: 232px; display: flex; border-right: 2px solid #c9c9cb; overflow: hidden; }
.thumbs { flex: 1; list-style: none; margin: 0; padding: 21px 0 0 6px; overflow: hidden; }
.thumbs li { display: flex; height: 104px; gap: 9px; }
.num { width: 26px; flex: none; font-size: 22px; line-height: 12px; color: #5c5c5c; }
.thumb { width: 131px; height: 77px; background: #fff; border: 1px solid #c0c0c0; overflow: hidden; }
.thumb svg { width: 100%; height: 100%; }
.current .num { color: #c05a3c; }
.current .thumb { outline: 4px solid #c4532f; }

.t-rule { stroke: #b8d0cb; stroke-width: 1; }
.t-logo { stroke: #8fbdb0; stroke-width: 3; }
.t-head { stroke: #444; stroke-width: 3; stroke-dasharray: 4 1 3 1; }
.t-line { fill: none; stroke: #4c4c4c; stroke-width: 2; stroke-dasharray: 3 1 5 1 2 1 7 1 4 2; }
.t-blue { stroke: #5a57d0; }
.t-red { stroke: #e46a6a; }
.t-fat { stroke-width: 3; }

.scroll { flex: none; display: flex; flex-direction: column; width: 22px; background: #dcdcde; }
.scroll button { flex: none; height: 22px; justify-content: center; background: #fff; border: 1px solid #bdbdbf; }
.scroll .caret { width: 10px; height: 6px; background: #777; }
.scroll .track { flex: 1; display: flex; flex-direction: column; }
.grip { background: #fff; border: 1px solid #bdbdbf; flex: none; }
.scroll-panel { margin: 3px 5px 2px 0; }
.scroll-panel .grip { height: 116px; margin-top: 438px; }
.scroll-main { margin: 3px 2px 0 0; background: #e5e5e6; }
.scroll-main .grip { height: 25px; margin-top: 423px; }
.scroll-main .track { flex: 0 0 637px; background: #dcdcde; }
.scroll .jump { border: 0; background: none; height: 25px; }

.editor { flex: 1; min-width: 0; display: flex; flex-direction: column; }
.stage-row { flex: 1; min-height: 0; display: flex; border-bottom: 2px solid #cacacc; }
.stage { flex: 1; display: flex; align-items: center; justify-content: center; padding: 0 0 0 3px; }
.slide { width: 74%; background: #fff; box-shadow: 0 0 0 1px #cfcfd1; }
.slide-svg { width: 100%; height: auto; }
.notes { flex: none; height: 59px; padding: 11px 18px; font-size: 21px; line-height: 24px; color: #666; }

/* slide drawing */
.brand-rule { stroke: #177a66; stroke-width: 5; }
.diamond { fill: none; stroke: #1d9480; stroke-width: 3; }
.d-gold { stroke: #e5ae45; }
.brand { font-size: 33px; font-weight: 700; fill: #17776a; text-anchor: middle; }
.wire { fill: none; stroke: #2f3034; stroke-width: 2; }
.thick { stroke-width: 4; }
.dash { stroke-dasharray: 11 6; stroke-width: 3; }
.frame { fill: none; stroke: #3c3c40; stroke-width: 3; stroke-dasharray: 3 6; }
.node rect { stroke: #34363a; stroke-width: 3; }
.n-sky rect { fill: #99ccff; }
.n-orange { fill: #ffb75f; }
.n-green { fill: #60e868; }
.n-yellow { fill: #fff566; }
.n-red { fill: #ff9c96; }
.n-pink { fill: #ff7dff; }
.n-cyan { fill: #50efff; }
.n-blue { fill: #55a8fc; }
.n-lime { fill: #aef05a; }
.lbl { font-size: 17px; fill: #3a3d42; text-anchor: middle; }
.l-sky { fill: #34526f; font-size: 17px; font-family: "Open Sans", "Noto Sans CJK SC", "Noto Sans CJK KR", sans-serif; }
.lbl .md { font-size: 20px; }
.lbl .jit { font-size: 18px; fill: #7d3a7d; }
.lbl .xl { font-size: 22px; }
.lbl.strong { font-size: 20px; font-weight: 600; fill: #33343a; }
.motto { font-size: 28px; font-style: italic; font-weight: 300; fill: #d9d9dc; text-anchor: middle; }
.halo { fill: #fff500; mix-blend-mode: multiply; }

/* status bar */
.status {
  position: relative;
  flex: none;
  height: 34px;
  border-top: 2px solid #d0d0d0;
  background: #f1f1f1;
  display: flex;
  align-items: center;
  padding: 0 10px 0 11px;
  color: #5a5a5a;
  overflow: hidden;
}
.s-count, .s-lang, .s-btn, .s-pct { padding-bottom: 2px; }
.s-spell { margin-left: 34px; }
.s-lang { margin-left: 23px; }
.s-btn { gap: 6px; }
.s-right { margin-left: auto; }
.s-comment { margin-left: 29px; }
.s-view { width: 55px; height: 100%; justify-content: center; margin-left: 28px; background: #c9c9c9; }
.s-sorter { margin-left: 17px; }
.s-zoom {
  appearance: none;
  width: 82px;
  height: 20px;
  margin: 0 0 0 216px;
  background: linear-gradient(#b0b0b0, #b0b0b0) center / 100% 2px no-repeat;
}
.s-zoom::-webkit-slider-thumb { appearance: none; width: 6px; height: 16px; background: #555; }
.s-plus { margin-left: 6px; }
.s-pct { margin-left: 22px; }
.s-fit { margin-left: 20px; }
.ime {
  position: absolute;
  right: 212px;
  top: 0;
  bottom: 0;
  width: 219px;
  padding: 0 10px 0 4px;
  display: flex;
  align-items: center;
  justify-content: space-between;
  background: #fbfdfe;
  border: 1px solid #cfd4d8;
}
.ime-lang { color: #3f7fc0; font-size: 21px; font-weight: 700; }
.orb {
  position: absolute;
  left: 19px;
  top: 24px;
  width: 40px;
  height: 40px;
  border-radius: 50%;
  border: 2px solid #5c7f9c;
  background: #a9c6dc;
}
```
